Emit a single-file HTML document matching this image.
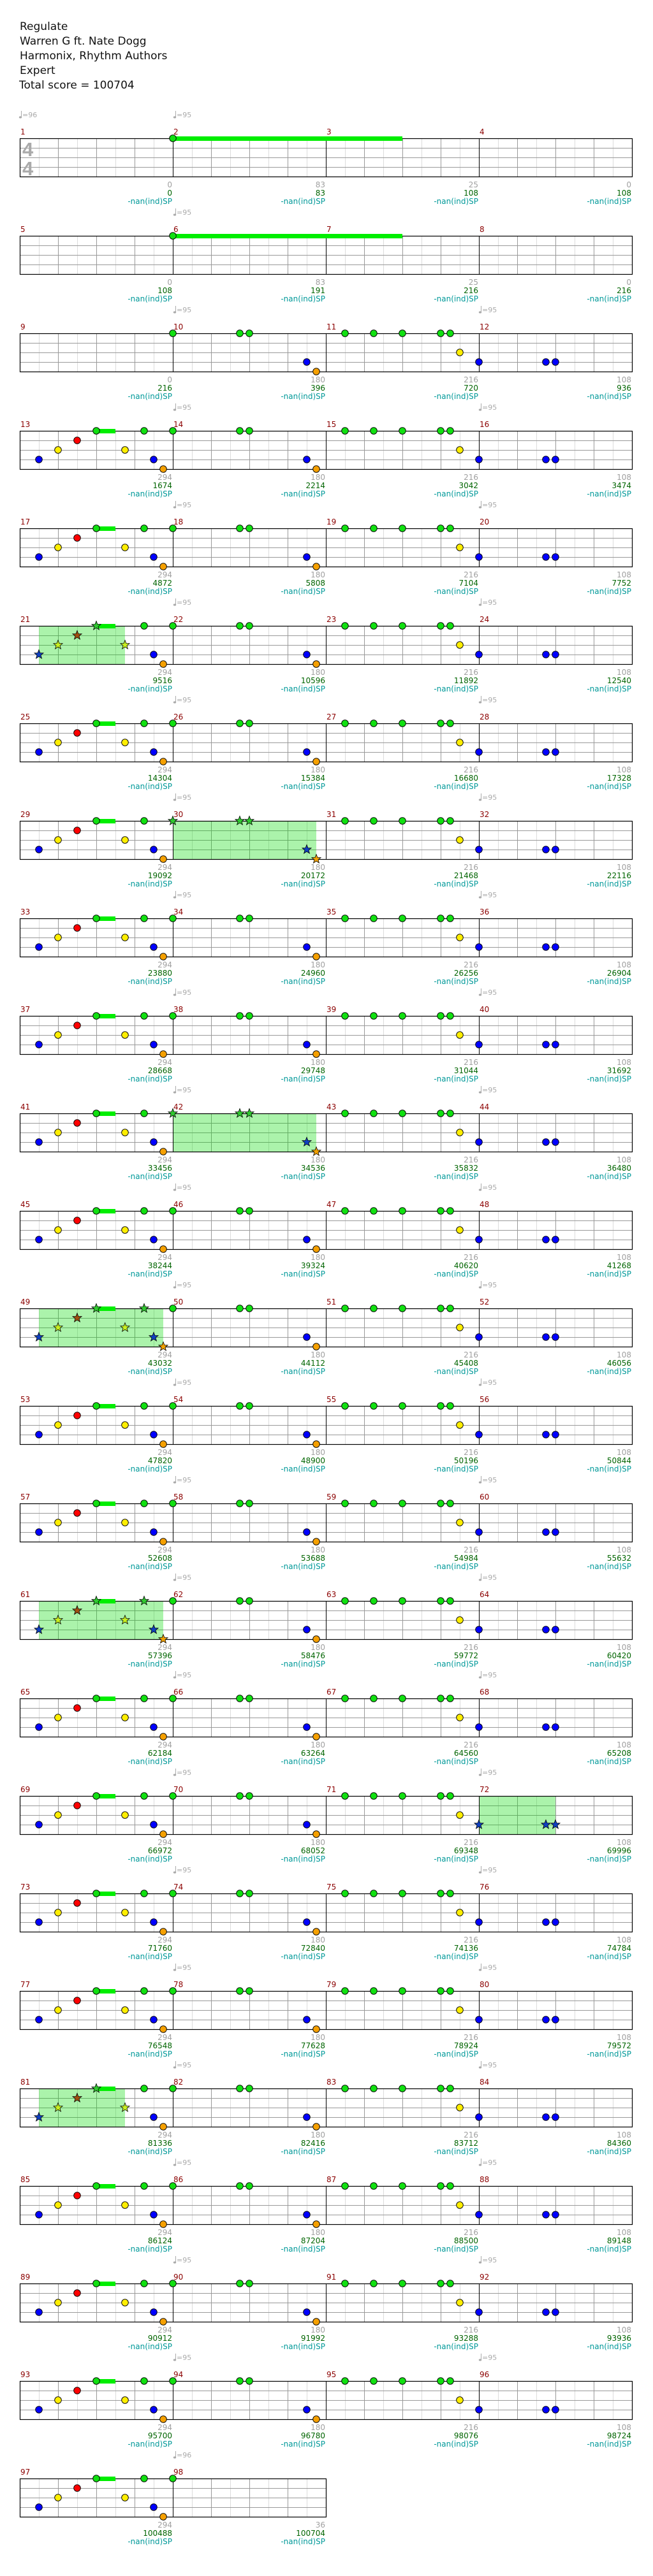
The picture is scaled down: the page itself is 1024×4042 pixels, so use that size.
<!DOCTYPE html>
<html><head><meta charset="utf-8">
<style>
html,body{margin:0;padding:0;background:#fff;}
#wrap{position:relative;width:1024px;height:4042px;overflow:hidden;}
.hd{position:absolute;left:31px;font-family:"DejaVu Sans","Liberation Sans",sans-serif;font-size:17px;color:#111;line-height:20px;}
svg text{font-family:"DejaVu Sans","Liberation Sans",sans-serif;}
</style></head>
<body><div id="wrap">
<div class="hd" style="top:32px">Regulate</div>
<div class="hd" style="top:55px">Warren G ft. Nate Dogg</div>
<div class="hd" style="top:78px">Harmonix, Rhythm Authors</div>
<div class="hd" style="top:101px">Expert</div>
<div class="hd" style="top:124px;left:30px">Total score = 100704</div>
<svg id="s" width="1024" height="4042" style="position:absolute;left:0;top:0"></svg>
</div>
<script>
(function(){
var s=document.getElementById("s"),out=[];
function add(t){out.push(t);}
var MX=[31,271,511,751,991];
var COL=["#11e011","#ff0000","#ffee00","#0000ff","#f5a000"];
var SCOL=["#30c830","#a05010","#c8f020","#1040c0","#f0a000"];
var A=[[30,3],[60,2],[90,1],[120,0,30],[165,2],[195,0],[210,3],[225,4]];
var B=[[0,0],[105,0],[120,0],[210,3],[225,4]];
var C=[[30,0],[75,0],[120,0],[180,0],[195,0],[210,2]];
var D=[[0,3],[105,3],[120,3]];
var scores=[[0,83,108,108],[108,191,216,216],[216,396,720,936],[1674,2214,3042,3474],[4872,5808,7104,7752],
[9516,10596,11892,12540],[14304,15384,16680,17328],[19092,20172,21468,22116],[23880,24960,26256,26904],
[28668,29748,31044,31692],[33456,34536,35832,36480],[38244,39324,40620,41268],[43032,44112,45408,46056],
[47820,48900,50196,50844],[52608,53688,54984,55632],[57396,58476,59772,60420],[62184,63264,64560,65208],
[66972,68052,69348,69996],[71760,72840,74136,74784],[76548,77628,78924,79572],[81336,82416,83712,84360],
[86124,87204,88500,89148],[90912,91992,93288,93936],[95700,96780,98076,98724],[100488,100704]];
var sp={5:[0,30,165],7:[1,0,225],10:[1,0,225],12:[0,30,225],15:[0,30,225],17:[3,0,120],20:[0,30,165]};
function star(cx,cy,r,fill){var p=[];for(var i=0;i<10;i++){var a=-Math.PI/2+i*Math.PI/5,rr=i%2?r*0.42:r;p.push((cx+rr*Math.cos(a)).toFixed(1)+","+(cy+rr*Math.sin(a)).toFixed(1));}
return '<polygon points="'+p.join(" ")+'" fill="'+fill+'" stroke="#000" stroke-width="0.8"/>';}
function tempo(x,y,v){return '<line x1="'+(x+2.5)+'" y1="'+(y-6)+'" x2="'+(x+2.5)+'" y2="'+(y+4)+'" stroke="#aaa" stroke-width="1"/><ellipse cx="'+(x+1)+'" cy="'+(y+4)+'" rx="2.2" ry="1.6" fill="#aaa"/><text x="'+(x+4)+'" y="'+(y+4)+'" font-size="11" fill="#aaa">='+v+'</text>';}
for(var r=0;r<25;r++){
  var T=217+153*r, nm=(r==24)?2:4, R=MX[nm];
  var tm=r==0?[[31,96],[273,95]]:r==1?[[273,95]]:r==24?[[273,96]]:[[273,95],[752,95]];
  tm.forEach(function(t){add(tempo(t[0],T-37,t[1]));});
  for(var x=31;x<=R;x+=30){var k=(x-31)/30;if(k%8==0)continue;
    add('<line x1="'+(x+0.5)+'" y1="'+T+'" x2="'+(x+0.5)+'" y2="'+(T+60)+'" stroke="'+(k%2?"#dcdcdc":"#999")+'" stroke-width="1"/>');}
  for(var j=1;j<4;j++)add('<line x1="31" y1="'+(T+15*j+0.5)+'" x2="'+R+'" y2="'+(T+15*j+0.5)+'" stroke="#999" stroke-width="1"/>');
  var spr=sp[r];
  if(spr){var sx=MX[spr[0]]+spr[1];add('<rect x="'+sx+'" y="'+T+'" width="'+(spr[2]-spr[1])+'" height="60" fill="rgba(0,220,0,0.33)"/>');}
  add('<rect x="31.5" y="'+(T+0.5)+'" width="'+(R-31)+'" height="60" fill="none" stroke="#000" stroke-width="1.2"/>');
  for(var m=1;m<nm;m++)add('<line x1="'+(MX[m]+0.5)+'" y1="'+T+'" x2="'+(MX[m]+0.5)+'" y2="'+(T+60)+'" stroke="#000" stroke-width="1"/>');
  var gr=r<2?[0,83,25,0]:r==2?[0,180,216,108]:r==24?[294,36]:[294,180,216,108];
  for(var m=0;m<nm;m++){
    add('<text x="'+(MX[m]+1)+'" y="'+(T-6)+'" font-size="12" fill="#8b0000">'+(4*r+m+1)+'</text>');
    var ex=MX[m+1]-1;
    add('<text x="'+ex+'" y="'+(T+77)+'" font-size="12" fill="#a0a0a0" text-anchor="end">'+gr[m]+'</text>');
    add('<text x="'+ex+'" y="'+(T+90)+'" font-size="12" fill="#006400" text-anchor="end">'+scores[r][m]+'</text>');
    add('<text x="'+ex+'" y="'+(T+103)+'" font-size="12" fill="#009999" text-anchor="end">-nan(ind)SP</text>');
  }
  if(r==0){add('<text x="35" y="'+(T+28)+'" font-size="31" font-weight="bold" fill="#aaa" style="font-family:Liberation Sans,sans-serif">4</text><text x="35" y="'+(T+58)+'" font-size="31" font-weight="bold" fill="#aaa" style="font-family:Liberation Sans,sans-serif">4</text>');}
  var ms;
  if(r<2)ms=[[],[[0,0,360]],[],[]];
  else if(r==2)ms=[[],B,C,D];
  else if(r==24)ms=[A,[[0,0]]];
  else ms=[A,B,C,D];
  var notes=[];
  ms.forEach(function(list,m){list.forEach(function(n){
    var x=MX[m]+n[0],y=T+15*n[1];
    var isStar=spr&&spr[0]==m&&n[0]>=spr[1]&&n[0]<=spr[2];
    if(n[2])add('<rect x="'+x+'" y="'+(y-3)+'" width="'+n[2]+'" height="7" fill="#00ee00"/>');
    notes.push([x,y,n[1],isStar]);});});
  notes.forEach(function(n){
    if(n[3])add(star(n[0],n[1],7.5,SCOL[n[2]]));
    else add('<circle cx="'+n[0]+'" cy="'+n[1]+'" r="5.3" fill="'+COL[n[2]]+'" stroke="#000" stroke-width="0.9"/>');});
}
s.innerHTML=out.join("");
})();
</script>
</body></html>
